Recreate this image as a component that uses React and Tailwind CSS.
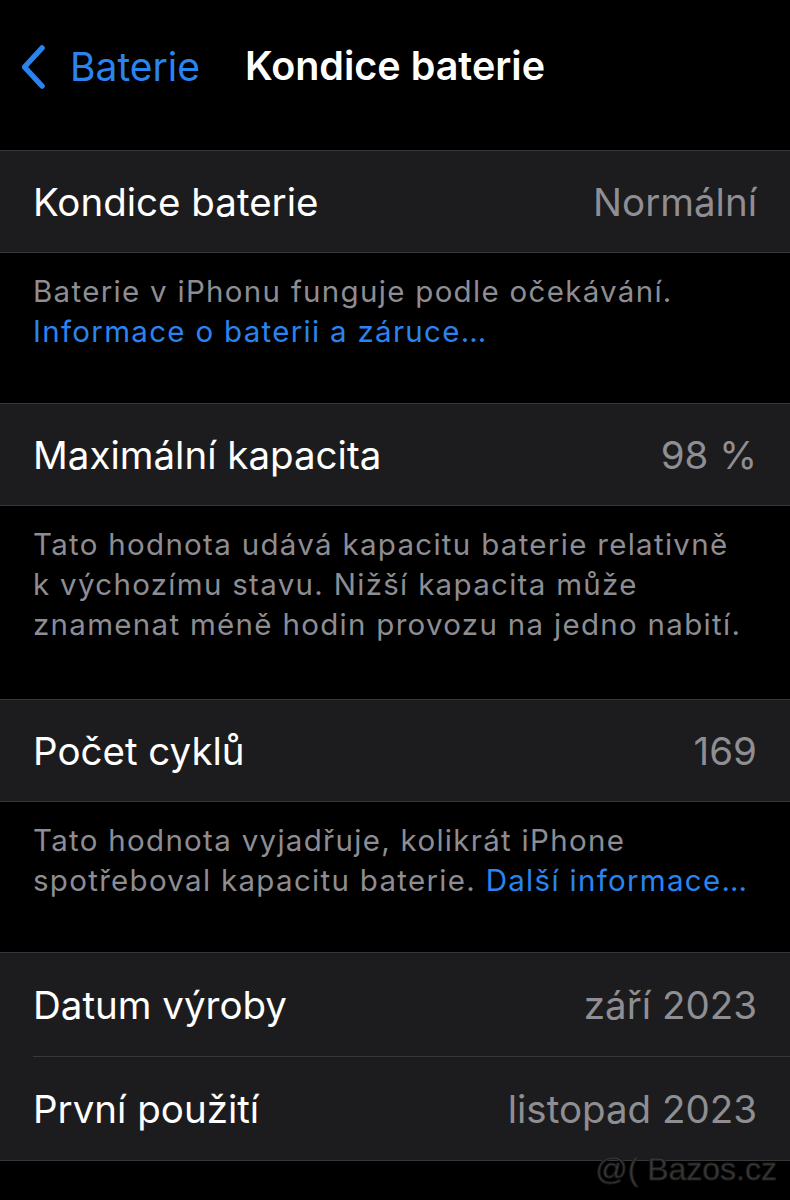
import React from "react";

const font = { fontFamily: "Inter, 'Noto Sans', sans-serif" };

function Cell({ label, value, h = "h-[101px]" }) {
  return (
    <div className={`flex items-center justify-between px-[33px] pt-[2px] ${h}`}>
      <span className="text-[38.5px] text-white">{label}</span>
      <span className="text-[38.5px] text-[#8e8e93]">{value}</span>
    </div>
  );
}

function Section({ children }) {
  return <div className="border-y border-[#38383a] bg-[#1c1c1e]">{children}</div>;
}

function Footer({ children, pb }) {
  return (
    <div className={`px-[33px] pt-[18px] text-[29.5px] leading-[40px] tracking-[1.3px] text-[#8d8d93] ${pb}`}>
      {children}
    </div>
  );
}

export default function App() {
  return (
    <div className="relative min-h-[1200px] w-[790px] overflow-hidden bg-black" style={font}>
      <div className="grid h-[150px] grid-cols-[1fr_auto_1fr] items-center pb-[16px]">
        <div className="flex items-center gap-[24px] pl-[20px]">
          <svg width="26" height="46" viewBox="0 0 26 46" fill="none">
            <path d="M22 4 L4.5 23 L22 42" stroke="#2a84f0" strokeWidth="5.5" strokeLinecap="round" strokeLinejoin="round" />
          </svg>
          <span className="text-[39px] text-[#2a84f0]">Baterie</span>
        </div>
        <div className="text-[39.5px] font-semibold text-white">Kondice baterie</div>
        <div />
      </div>

      <Section>
        <Cell label="Kondice baterie" value="Normální" />
      </Section>
      <Footer pb="pb-[52px]">
        <div>Baterie v iPhonu funguje podle očekávání.</div>
        <div className="text-[#2a84f0]">Informace o baterii a záruce…</div>
      </Footer>

      <Section>
        <Cell label="Maximální kapacita" value="98 %" />
      </Section>
      <Footer pb="pb-[55px]">
        <div>Tato hodnota udává kapacitu baterie relativně</div>
        <div>k výchozímu stavu. Nižší kapacita může</div>
        <div>znamenat méně hodin provozu na jedno nabití.</div>
      </Footer>

      <Section>
        <Cell label="Počet cyklů" value="169" />
      </Section>
      <Footer pb="pb-[52px]">
        <div>Tato hodnota vyjadřuje, kolikrát iPhone</div>
        <div>
          spotřeboval kapacitu baterie. <span className="text-[#2a84f0]">Další informace…</span>
        </div>
      </Footer>

      <Section>
        <Cell label="Datum výroby" value="září 2023" h="h-[103px]" />
        <div className="ml-[33px] h-px bg-[#38383a]" />
        <Cell label="První použití" value="listopad 2023" h="h-[103px]" />
      </Section>

      <div
        className="absolute right-[13px] top-[1153px] whitespace-pre text-[32px] leading-none text-[#3a3a3a]"
        style={{ fontFamily: "'Liberation Sans', Arial, sans-serif", WebkitTextStroke: "1px #1a1a1a" }}
      >
        @( Bazos.cz
      </div>
    </div>
  );
}
